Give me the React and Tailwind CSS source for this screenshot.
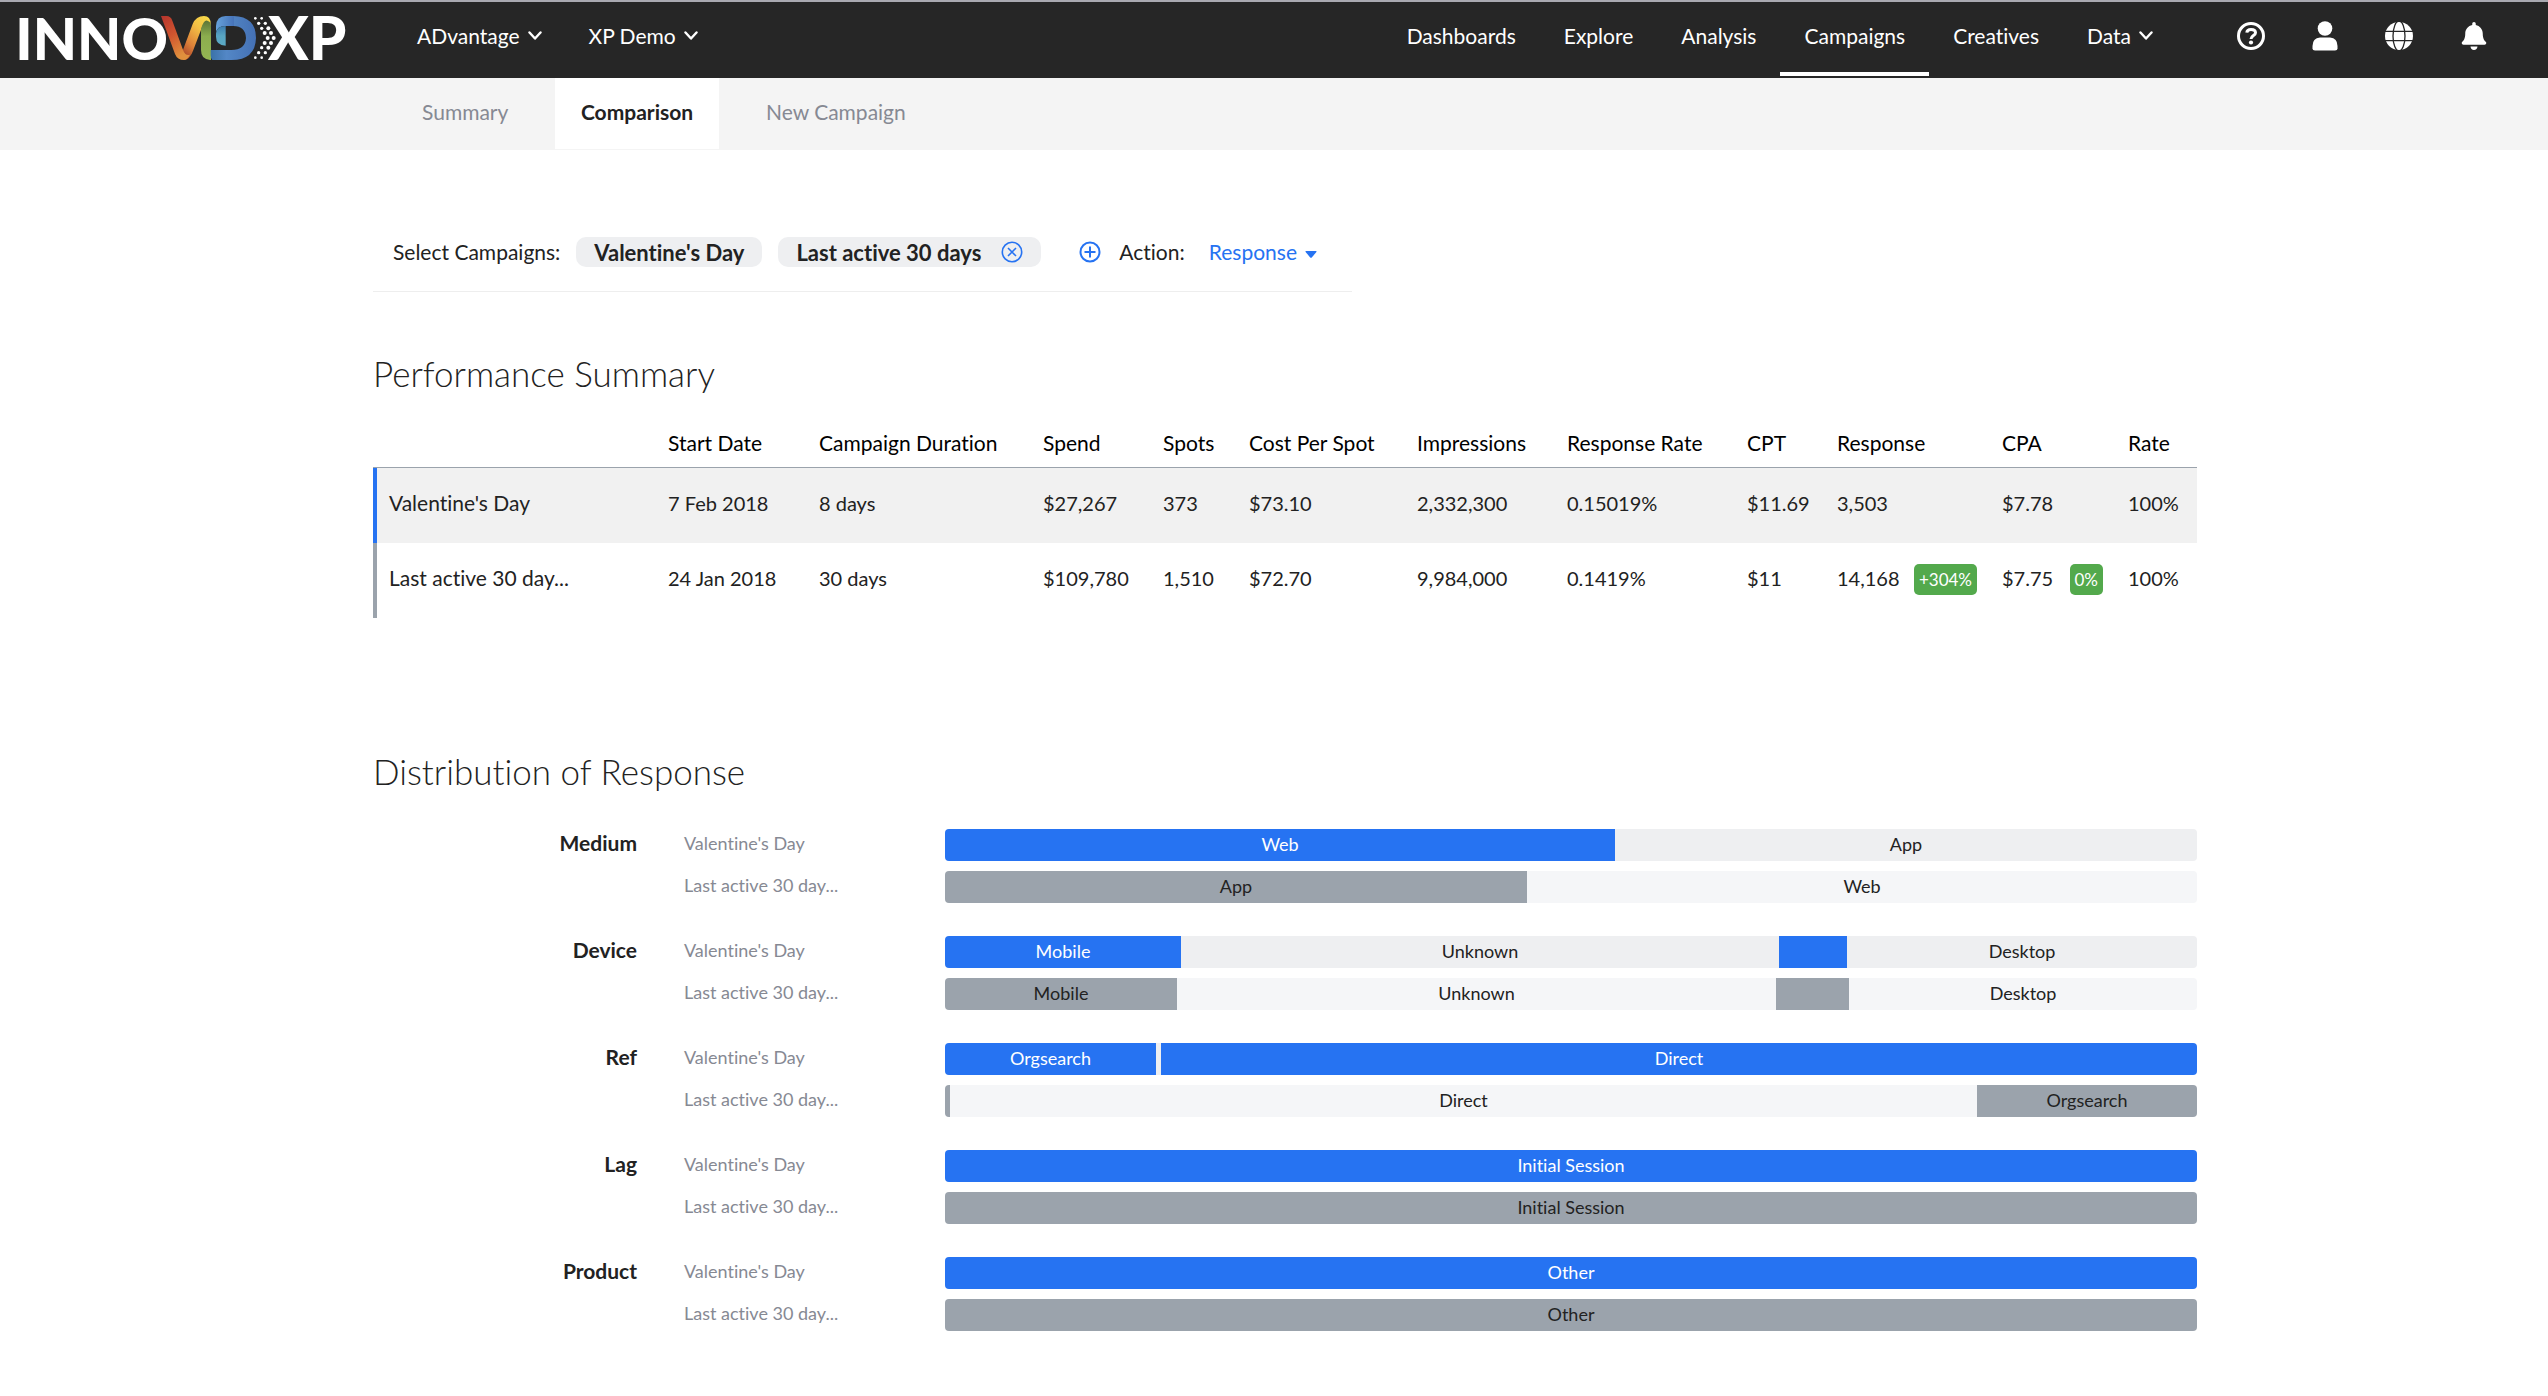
import { FaBell } from "react-icons/fa";

function Chevron() {
  return (
    <svg viewBox="0 0 14 10" className="h-[10px] w-[14px]" fill="none" stroke="currentColor" strokeWidth="2.4" strokeLinecap="round" strokeLinejoin="round" aria-hidden="true">
      <path d="M1.5 1.5 7 7.500 12.5 1.5" />
    </svg>
  );
}

const DOTS = [
  [766, 55, 4], [785, 55, 4],
  [776, 70, 5], [796, 70, 5],
  [785, 85, 5], [805, 85, 6],
  [794, 99, 6], [813, 99, 6],
  [803, 114, 6], [821, 114, 6],
  [794, 129, 6], [813, 129, 6],
  [785, 143, 5], [805, 143, 6],
  [776, 158, 5], [796, 158, 5],
  [766, 173, 4], [785, 173, 4],
];

function Logo() {
  return (
    <svg viewBox="0 0 1110 228" className="h-[76px] w-[370px]" role="img" aria-label="INNOVID XP">
      <defs>
        <linearGradient id="red" x1="0" y1="0" x2="0.5" y2="1">
          <stop offset="0" stopColor="#b5342d" />
          <stop offset="0.5" stopColor="#d1552f" />
          <stop offset="1" stopColor="#e0903d" />
        </linearGradient>
        <linearGradient id="gold" x1="0.8" y1="0" x2="0.2" y2="1">
          <stop offset="0" stopColor="#f8d94a" />
          <stop offset="0.3" stopColor="#f3c044" />
          <stop offset="0.7" stopColor="#dd8139" />
          <stop offset="1" stopColor="#a9452a" />
        </linearGradient>
        <linearGradient id="green" x1="0" y1="0" x2="0" y2="1">
          <stop offset="0" stopColor="#5c7437" />
          <stop offset="0.4" stopColor="#8cad4e" />
          <stop offset="1" stopColor="#94b653" />
        </linearGradient>
        <linearGradient id="blue" x1="0" y1="0" x2="1" y2="0">
          <stop offset="0" stopColor="#3a72a8" />
          <stop offset="0.35" stopColor="#5387c6" />
          <stop offset="1" stopColor="#4470b4" />
        </linearGradient>
        <linearGradient id="sky" x1="0" y1="0" x2="1" y2="0">
          <stop offset="0" stopColor="#66a3dc" />
          <stop offset="1" stopColor="#4672b8" />
        </linearGradient>
        <linearGradient id="teal" x1="0" y1="0" x2="0" y2="1">
          <stop offset="0" stopColor="#3c7cb0" />
          <stop offset="0.5" stopColor="#58a5c2" />
          <stop offset="1" stopColor="#5baac6" />
        </linearGradient>
      </defs>
      <text x="46" y="173" fill="#fff" fontFamily="Lato, sans-serif" fontSize="172" fontWeight="900">INNO</text>
      <path d="M548 146 L578 66 Q588 42 612 42 Q632 42 632 66 L632 74 Q618 46 606 76 L580 144 Q570 174 550 174 Z" fill="url(#gold)" />
      <path d="M483 42 H500 Q512 42 517 56 L550 146 Q556 162 570 158 Q562 174 552 174 Q532 174 525 156 Z" fill="url(#red)" />
      <path d="M603 80 Q612 52 622 56 Q633 58 633 74 V174 H630 Q603 172 603 144 Z" fill="url(#green)" />
      <path d="M632 144 H694 Q736 144 738 108 Q736 72 700 72 V42 Q768 44 768 108 Q766 174 694 174 H637 Q632 170 632 160 Z" fill="url(#blue)" />
      <path d="M677 42 H702 V72 H677 Q648 72 648 96 V72 Q650 42 677 42 Z" fill="url(#sky)" />
      <path d="M677 72 V131 Q648 130 648 104 V94 Q650 72 677 72 Z" fill="url(#teal)" />
      {DOTS.map(([x, y, r]) => (
        <circle key={`${x}-${y}`} cx={x} cy={y - 6} r={r} fill="#fff" />
      ))}
      <text x="804" y="173" fill="#fff" fontFamily="Lato, sans-serif" fontSize="180" fontWeight="900">XP</text>
    </svg>
  );
}

function HelpIcon() {
  return (
    <svg viewBox="0 0 28 28" className="size-7" fill="none" stroke="currentColor" strokeWidth="3" aria-hidden="true">
      <circle cx="14" cy="14" r="12.5" />
      <path d="M9.8 10.6C10 8.300 11.600 7.400 14 7.400C16.800 7.400 18.500 8.700 18.500 10.700C18.500 13.600 14 13.400 14 17" />
      <circle cx="14" cy="20.500" r="2.100" fill="currentColor" stroke="none" />
    </svg>
  );
}

function UserIcon() {
  return (
    <svg viewBox="0 0 26 30" className="h-[30px] w-[26px]" fill="currentColor" aria-hidden="true">
      <circle cx="13" cy="7.500" r="7.300" />
      <path d="M8 16.500H18Q25.500 17 25.500 25V27.500Q25.500 29.500 23 29.500H3Q.5 29.500 .5 27.500V25Q.5 17 8 16.500Z" />
    </svg>
  );
}

function GlobeIcon() {
  return (
    <svg viewBox="0 0 28 28" className="size-7" aria-hidden="true">
      <circle cx="14" cy="14" r="14" fill="currentColor" />
      <g fill="none" stroke="#262626" strokeWidth="1.300">
        <path d="M0 9.300H28M0 18.700H28" />
        <ellipse cx="14" cy="14" rx="6" ry="15" />
      </g>
    </svg>
  );
}

const NAV = ["Dashboards", "Explore", "Analysis", "Campaigns", "Creatives"];

function TopBar() {
  return (
    <header className="flex h-[78px] items-start justify-between border-t-2 border-[#a9a9b1] bg-[#262626] text-[21px] text-white">
      <div className="flex">
        <a href="#home"><Logo /></a>
        <div className="ml-[47px] flex h-[68px] gap-[47px]">
          <button className="flex items-center gap-2">ADvantage <Chevron /></button>
          <button className="flex items-center gap-2">XP Demo <Chevron /></button>
        </div>
      </div>
      <div className="flex">
        <nav className="flex h-[74px]">
          {NAV.map((n) => (
            <a key={n} href={`#${n.toLowerCase()}`} className={n === "Campaigns" ? "border-b-4 border-white px-6 leading-[68px]" : "px-6 leading-[68px]"}>{n}</a>
          ))}
          <button className="flex h-[68px] items-center gap-2 px-6">Data <Chevron /></button>
        </nav>
        <div className="mr-[60px] ml-[60px] flex h-[68px] items-center gap-[47px]">
          <button aria-label="Help"><HelpIcon /></button>
          <button aria-label="Account"><UserIcon /></button>
          <button aria-label="Language"><GlobeIcon /></button>
          <button aria-label="Notifications"><FaBell className="size-7" /></button>
        </div>
      </div>
    </header>
  );
}

function Tabs() {
  return (
    <nav className="flex h-[72px] border-b border-[#f4f4f4] bg-[#f4f4f4] pl-[374px] text-[21px] leading-[68px] text-[#868993]">
      <a href="#summary" className="w-[181px] pl-12">Summary</a>
      <a href="#comparison" className="w-[164px] bg-white text-center font-bold text-[#222]">Comparison</a>
      <a href="#new" className="pl-[47px]">New Campaign</a>
    </nav>
  );
}

function Filters() {
  return (
    <div className="flex h-[79px] w-[979px] items-center border-b border-[#eee] pl-5 text-[21px]">
      <span>Select Campaigns:</span>
      <span className="ml-4 flex h-[30px] items-center rounded-[10px] bg-[#eeeff1] px-[18px] text-[22px] font-bold">Valentine's Day</span>
      <span className="ml-4 flex h-[30px] items-center gap-5 rounded-[10px] bg-[#eeeff1] px-[18px] text-[22px] font-bold">
        Last active 30 days
        <button aria-label="Remove campaign" className="text-[#2673f2]">
          <svg viewBox="0 0 22 22" className="size-[22px]" fill="none" stroke="currentColor" strokeWidth="1.600"><circle cx="11" cy="11" r="9.700" /><path d="m7 7 8 8m0-8-8 8" /></svg>
        </button>
      </span>
      <button aria-label="Add campaign" className="ml-[38px] text-[#2673f2]">
        <svg viewBox="0 0 22 22" className="size-[22px]" fill="none" stroke="currentColor" strokeWidth="2"><circle cx="11" cy="11" r="9.500" /><path d="M11 5.500v11M5.500 11h11" /></svg>
      </button>
      <span className="ml-[18px]">Action:</span>
      <button className="ml-6 flex items-center gap-2 text-[#2673f2]">
        Response
        <svg viewBox="0 0 12 7" className="mt-1 h-[7px] w-3" fill="currentColor" aria-hidden="true"><path d="M1 0h10q1 0 .4 1L6.800 6.400q-.8.900-1.600 0L.6 1Q0 0 1 0Z" /></svg>
      </button>
    </div>
  );
}

const COLUMNS = [
  ["", "w-[295px]"], ["Start Date", "w-[151px]"], ["Campaign Duration", "w-[224px]"], ["Spend", "w-[120px]"],
  ["Spots", "w-[86px]"], ["Cost Per Spot", "w-[168px]"], ["Impressions", "w-[150px]"], ["Response Rate", "w-[180px]"],
  ["CPT", "w-[90px]"], ["Response", "w-[165px]"], ["CPA", "w-[126px]"], ["Rate", "w-[69px]"],
];

const ROWS = [
  { name: "Valentine's Day", cells: ["7 Feb 2018", "8 days", "$27,267", "373", "$73.10", "2,332,300", "0.15019%", "$11.69", "3,503", "$7.78", "100%"], changes: {} },
  { name: "Last active 30 day...", cells: ["24 Jan 2018", "30 days", "$109,780", "1,510", "$72.70", "9,984,000", "0.1419%", "$11", "14,168", "$7.75", "100%"], changes: { 8: "+304%", 9: "0%" } },
];

function PerformanceTable() {
  return (
    <table className="w-full table-fixed border-separate border-spacing-0 text-left text-xl whitespace-nowrap">
      <thead>
        <tr className="h-[53px] text-[21px] text-black">
          {COLUMNS.map(([c, w]) => (
            <th key={c} scope="col" className={`${w} border-b border-[#9ba3ac] pt-1 font-normal`}>{c}</th>
          ))}
        </tr>
      </thead>
      <tbody>
        {ROWS.map((r, i) => (
          <tr key={r.name} className={i === 0 ? "h-[75px] bg-[#f1f1f1]" : "h-[75px]"}>
            <th scope="row" className={i === 0 ? "border-l-4 border-[#2673f2] pb-1.5 pl-3 text-[21px] font-normal" : "border-l-4 border-[#9ba3ac] pb-1.5 pl-3 text-[21px] font-normal"}>{r.name}</th>
            {r.cells.map((c, j) => (
              <td key={COLUMNS[j + 1][0]} className="pb-1.5">
                {r.changes[j] ? (
                  <div className="flex h-7 items-center justify-between pr-[25px]">
                    {c}
                    <span className="mt-1 rounded-[5px] bg-[#53a94c] px-[5px] text-[17px] leading-[31px] text-white">{r.changes[j]}</span>
                  </div>
                ) : c}
              </td>
            ))}
          </tr>
        ))}
      </tbody>
    </table>
  );
}

const BLUE = "bg-[#2673f2] text-white";
const GRAY = "bg-[#9ba3ac]";
const PALE = "bg-[#eeeff1]";
const FAINT = "bg-[#f5f6f8]";

const GROUPS = [
  { name: "Medium", bars: [
    [["Web", 670, BLUE], ["App", 582, PALE]],
    [["App", 582, GRAY], ["Web", 670, FAINT]],
  ] },
  { name: "Device", bars: [
    [["Mobile", 236, BLUE], ["Unknown", 598, PALE], ["", 68, BLUE], ["Desktop", 350, PALE]],
    [["Mobile", 232, GRAY], ["Unknown", 599, FAINT], ["", 73, GRAY], ["Desktop", 348, FAINT]],
  ] },
  { name: "Ref", bars: [
    [["Orgsearch", 211, BLUE], ["", 5, PALE], ["Direct", 1036, BLUE]],
    [["", 5, GRAY], ["Direct", 1027, FAINT], ["Orgsearch", 220, GRAY]],
  ] },
  { name: "Lag", bars: [[["Initial Session", 1, BLUE]], [["Initial Session", 1, GRAY]]] },
  { name: "Product", bars: [[["Other", 1, BLUE]], [["Other", 1, GRAY]]] },
];

const CAMPAIGNS = ["Valentine's Day", "Last active 30 day..."];

function Distribution() {
  return (
    <div className="flex flex-col gap-[33px]">
      {GROUPS.map((g) => (
        <div key={g.name} className="flex">
          <h3 className="w-[264px] text-right text-[21px] leading-[28px] font-bold">{g.name}</h3>
          <div className="ml-[47px] flex grow flex-col gap-[10px]">
            {g.bars.map((bar, i) => (
              <div key={CAMPAIGNS[i]} className="flex">
                <div className="w-[261px] text-lg leading-[28px] text-[#868993]">{CAMPAIGNS[i]}</div>
                <div className="flex h-8 grow overflow-hidden rounded-[4px]">
                  {bar.map(([label, size, color], k) => (
                    <div key={k} className={`${color} min-w-0 basis-0 text-center text-lg leading-[30px]`} style={{ flexGrow: size }}>{label}</div>
                  ))}
                </div>
              </div>
            ))}
          </div>
        </div>
      ))}
    </div>
  );
}

export default function App() {
  return (
    <div className="min-h-screen bg-white font-['Lato',sans-serif] text-[#222] [font-variant-ligatures:none]">
      <TopBar />
      <Tabs />
      <main className="mr-[351px] ml-[373px] pt-[63px] pb-12">
        <Filters />
        <h2 className="mt-[60px] text-[35px] leading-[42px] font-light">Performance Summary</h2>
        <div className="mt-[21px]"><PerformanceTable /></div>
        <h2 className="mt-[132px] text-[35px] leading-[42px] font-light">Distribution of Response</h2>
        <div className="mt-[37px]"><Distribution /></div>
      </main>
    </div>
  );
}
